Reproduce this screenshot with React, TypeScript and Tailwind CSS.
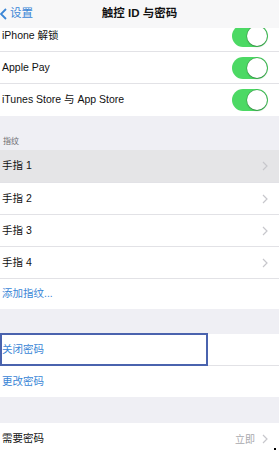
import { ReactNode } from 'react'

const font = { fontFamily: '"Liberation Sans", "Noto Sans CJK SC", sans-serif' }

function Toggle() {
  return (
    <div className="relative h-[22px] w-[36px] rounded-full bg-[#4cd964]">
      <div className="absolute right-[1px] top-[1px] h-[20px] w-[20px] rounded-full bg-white shadow-[0_0_0_0.5px_rgba(0,0,0,0.25),0_1px_2px_rgba(0,0,0,0.2)]" />
    </div>
  )
}

function Chevron({ className = '' }: { className?: string }) {
  return (
    <svg width="6" height="10" viewBox="0 0 6 10" className={className}>
      <polyline points="1,1 5,5 1,9" fill="none" stroke="#c7c7cc" strokeWidth="1.2" />
    </svg>
  )
}

function Row({
  children,
  right,
  last = false,
  className = '',
}: {
  children: ReactNode
  right?: ReactNode
  last?: boolean
  className?: string
}) {
  return (
    <div
      className={`relative flex h-[32px] items-center justify-between pl-[2px] pr-[11px] ${
        last ? '' : 'border-b border-[#e2e2e6]'
      } ${className}`}
    >
      <span className="text-[10.5px] text-[#111]">{children}</span>
      {right}
    </div>
  )
}

export default function App() {
  return (
    <div className="relative h-[452px] w-[279px] overflow-hidden bg-[#efeff4]" style={font}>
      {/* Nav bar over the scrolled list */}
      <header className="absolute left-0 right-0 top-0 z-10 flex h-[28px] items-center bg-[#f7f7f8]">
        <div className="flex items-center gap-[3px] text-[#3a86d6]">
          <svg width="7" height="12" viewBox="0 0 7 12">
            <polyline points="6,1 1,6 6,11" fill="none" stroke="#3a86d6" strokeWidth="1.8" />
          </svg>
          <span className="text-[11.5px]">设置</span>
        </div>
        <h1 className="absolute left-0 right-0 text-center text-[11.5px] font-semibold text-[#111]">
          触控 ID 与密码
        </h1>
      </header>

      <div className="pt-[20px]">
        <div className="bg-white">
          <Row right={<Toggle />}>iPhone 解锁</Row>
          <Row right={<Toggle />}>Apple Pay</Row>
          <Row right={<Toggle />} last className="h-[31px]">
            iTunes Store 与 App Store
          </Row>
        </div>

        <div className="px-[3px] pb-[4px] pt-[21px] text-[8px] leading-[9px] text-[#6d6d72]">指纹</div>

        <div className="bg-white">
          <Row right={<Chevron />} className="h-[33px] bg-[#e5e5e7]">
            手指 1
          </Row>
          <Row right={<Chevron />}>手指 2</Row>
          <Row right={<Chevron />}>手指 3</Row>
          <Row right={<Chevron />}>手指 4</Row>
          <div className="flex h-[30px] items-center pl-[2px] text-[10.5px] text-[#3a86d6]">添加指纹...</div>
        </div>

        <div className="h-[25px]" />

        <div className="bg-white">
          <div className="relative flex h-[32px] items-center border-b border-[#e2e2e6] pl-[2px] text-[10.5px] text-[#3a86d6]">
            关闭密码
            <div className="absolute -top-[1px] left-0 h-[33px] w-[208px] border-2 border-[#4a63ae]" />
          </div>
          <div className="flex h-[31px] items-center pl-[2px] text-[10.5px] text-[#3a86d6]">更改密码</div>
        </div>

        <div className="h-[26px]" />

        <div className="bg-white">
          <Row
            last
            right={
              <div className="flex items-center gap-[7px]">
                <span className="text-[10px] text-[#a8a8ad]">立即</span>
                <Chevron />
              </div>
            }
          >
            需要密码
          </Row>
        </div>
      </div>
      <div className="absolute bottom-[2px] right-[3px] h-[2px] w-[2px] bg-black" />
    </div>
  )
}
